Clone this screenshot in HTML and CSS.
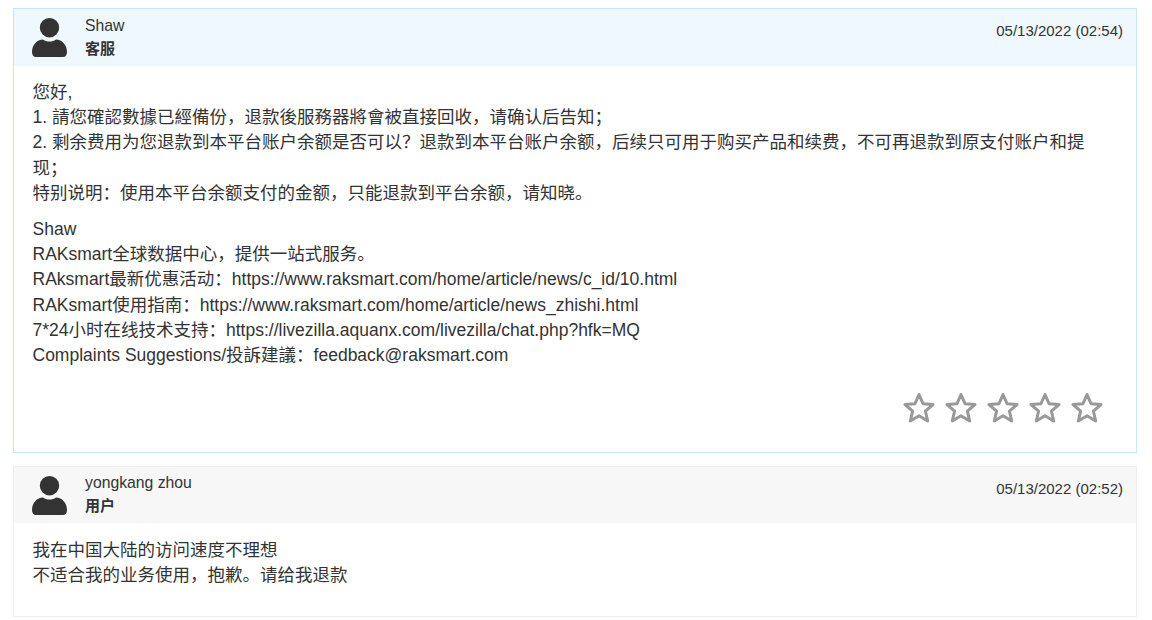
FILE: index.html
```html
<!DOCTYPE html>
<html lang="zh">
<head>
    <meta charset="UTF-8">
    <meta name="viewport" content="width=device-width, initial-scale=1.0">
    <title>Ticket</title>
    <link rel="stylesheet" href="styles.css">
</head>
<body>
    <svg class="defs" width="0" height="0">
        <defs>
            <symbol id="avatar" viewBox="0 0 35 39">
                <circle cx="17.5" cy="9.700" r="9.700"/>
                <path d="M0 34c0-7 5-12.500 11-12.500 2 1.500 4 2 6.500 2s4.500-.5 6.500-2c6 0 11 5.500 11 12.500 0 3-1.500 5-4 5H4c-2.500 0-4-2-4-5z"/>
            </symbol>
            <symbol id="star" viewBox="0 0 32 32">
                <path d="M16 2.500l4 9.200 10 .9-7.600 6.600 2.300 9.800L16 23.800 7.300 29l2.300-9.800L2 12.600l10-.9z"/>
            </symbol>
        </defs>
    </svg>

    <div class="reply staff">
        <div class="reply-head">
            <svg class="avatar"><use href="#avatar"/></svg>
            <div class="who">
                <div class="who-name">Shaw</div>
                <div class="who-role">客服</div>
            </div>
            <div class="reply-date">05/13/2022 (02:54)</div>
        </div>
        <div class="reply-body">
            <p>您好,<br>
            1. 請您確認數據已經備份，退款後服務器將會被直接回收，请确认后告知；<br>
            2. 剩余费用为您退款到本平台账户余额是否可以？退款到本平台账户余额，后续只可用于购买产品和续费，不可再退款到原支付账户和提现；<br>
            特别说明：使用本平台余额支付的金额，只能退款到平台余额，请知晓。</p>
            <p>Shaw<br>
            RAKsmart全球数据中心，提供一站式服务。<br>
            RAksmart最新优惠活动：https://www.raksmart.com/home/article/news/c_id/10.html<br>
            RAKsmart使用指南：https://www.raksmart.com/home/article/news_zhishi.html<br>
            7*24小时在线技术支持：https://livezilla.aquanx.com/livezilla/chat.php?hfk=MQ<br>
            Complaints Suggestions/投訴建議：feedback@raksmart.com</p>
            <div class="stars">
                <svg class="star"><use href="#star"/></svg>
                <svg class="star"><use href="#star"/></svg>
                <svg class="star"><use href="#star"/></svg>
                <svg class="star"><use href="#star"/></svg>
                <svg class="star"><use href="#star"/></svg>
            </div>
        </div>
    </div>

    <div class="reply">
        <div class="reply-head">
            <svg class="avatar"><use href="#avatar"/></svg>
            <div class="who">
                <div class="who-name">yongkang zhou</div>
                <div class="who-role">用户</div>
            </div>
            <div class="reply-date">05/13/2022 (02:52)</div>
        </div>
        <div class="reply-body">
            <p>我在中国大陆的访问速度不理想<br>
            不适合我的业务使用，抱歉。请给我退款</p>
        </div>
    </div>
</body>
</html>
```

FILE: styles.css
```css
* {
    box-sizing: border-box;
    margin: 0;
    padding: 0;
}

body {
    background: #fff;
    color: #333;
    font-family: "Liberation Sans", "Noto Sans CJK SC", sans-serif;
    padding: 8px 15px 0 13px;
}

.defs {
    position: absolute;
}

.reply {
    border: 1px solid #eee;
    margin-bottom: 13px;
}

.reply.staff {
    border-color: #c9e4f9;
}

.reply-head {
    display: flex;
    height: 56.500px;
    background: #f7f7f7;
    padding: 9px 13px 0 18px;
}

.staff .reply-head {
    background: #f0f8ff;
}

.avatar {
    width: 35px;
    height: 39px;
    fill: #333;
}

.who {
    margin-left: 18px;
    font-size: 15px;
    line-height: 20px;
    margin-top: -2.500px;
}

.who-name {
    font-size: 15.750px;
    margin-bottom: 3px;
}

.who-role {
    font-weight: 700;
}

.reply-date {
    margin-left: auto;
    margin-top: 3px;
    font-size: 15px;
    line-height: 20px;
}

.reply-body {
    padding: 14.400px 18.500px 0;
    font-size: 17.500px;
    line-height: 25.200px;
    min-height: 93px;
}

.reply-body p {
    margin-bottom: 11px;
    padding-right: 30px;
}

.stars {
    display: flex;
    justify-content: flex-end;
    gap: 10px;
    padding: 12.600px 15px 28px 0;
}

.star {
    width: 32px;
    height: 32px;
    fill: none;
    stroke: #999;
    stroke-width: 3;
    stroke-linejoin: round;
}
```
